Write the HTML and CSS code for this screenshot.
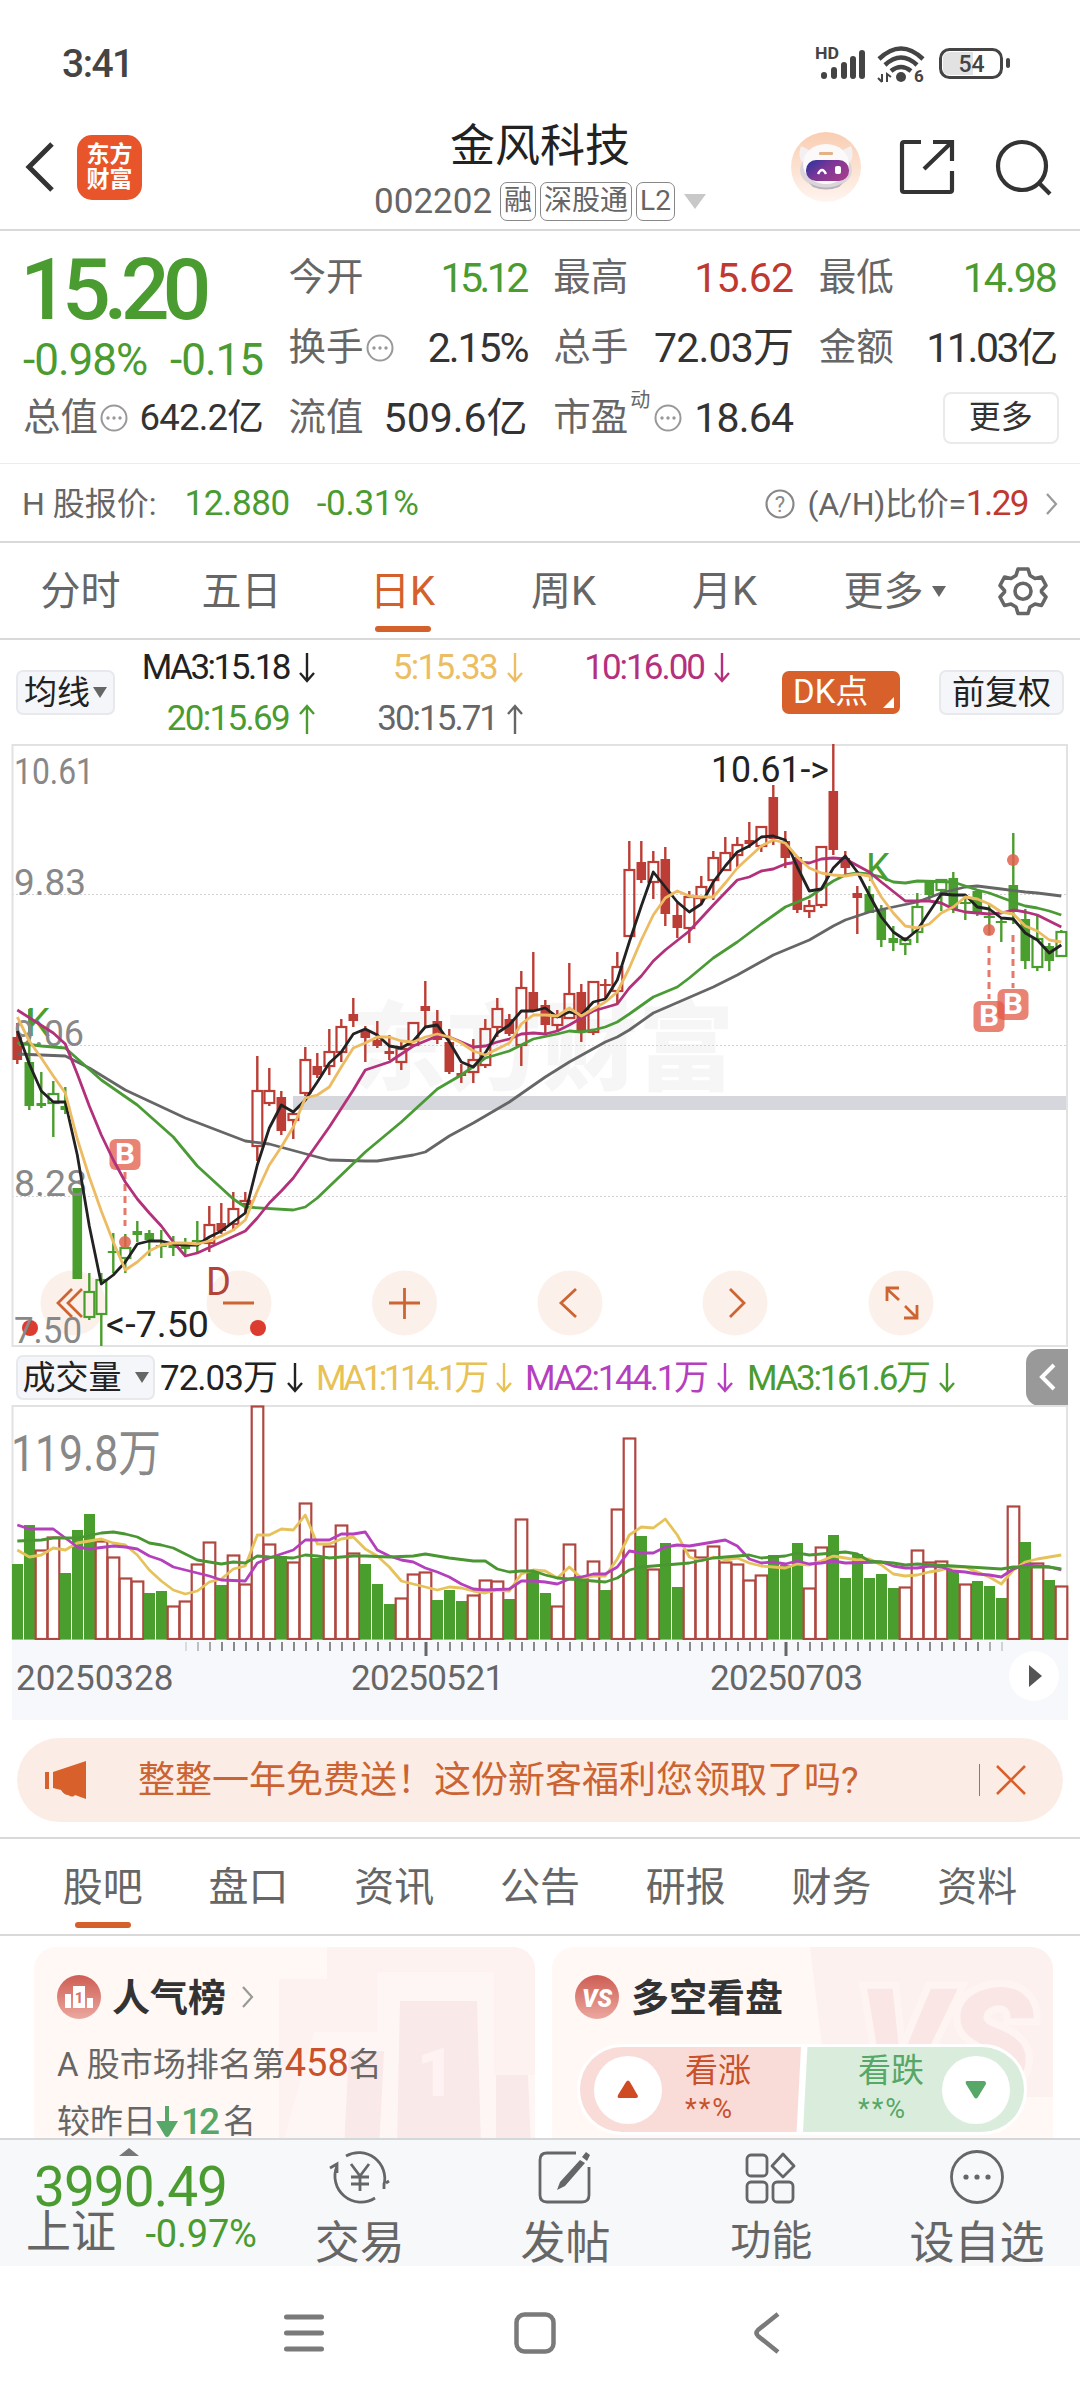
FILE: index.html
```html
<!DOCTYPE html>
<html lang="zh-CN">
<head>
<meta charset="UTF-8">
<meta name="viewport" content="width=device-width, initial-scale=1.0">
<title>金风科技 002202</title>
<link rel="stylesheet" href="styles.css">
</head>
<body>
<svg width="0" height="0" class="defs">
    <symbol id="down" viewBox="0 0 16 30"><path d="M8 0V28M1 20L8 28L15 20" fill="none" stroke="currentColor" stroke-width="2.4"/></symbol>
    <symbol id="up" viewBox="0 0 16 30"><path d="M8 30V2M1 10L8 2L15 10" fill="none" stroke="currentColor" stroke-width="2.4"/></symbol>
    <symbol id="dots" viewBox="0 0 28 28"><circle cx="14" cy="14" r="12.5" fill="none" stroke="#999" stroke-width="2"/><circle cx="8" cy="14" r="1.7" fill="#999"/><circle cx="14" cy="14" r="1.7" fill="#999"/><circle cx="20" cy="14" r="1.7" fill="#999"/></symbol>
</svg>
<div class="phone">
    <div class="status">
        <span class="time">3:41</span>
        <svg class="status-icons" width="200" height="40" viewBox="0 0 200 40">
            <g fill="#444">
                <text x="0" y="14" font-size="17" font-weight="700" textLength="24" lengthAdjust="spacingAndGlyphs">HD</text>
                <rect x="6" y="27" width="6" height="7" rx="3"/>
                <rect x="16" y="22" width="6" height="12" rx="3"/>
                <rect x="26" y="17" width="6" height="17" rx="3"/>
                <rect x="35" y="11" width="6" height="23" rx="3"/>
                <rect x="44" y="5" width="6" height="29" rx="3"/>
                <circle cx="86" cy="32" r="5"/>
                <text x="99" y="37" font-size="17" font-weight="700">6</text>
                <path d="M67 29V37M63 33L67 37M72 37V29L76 32" stroke="#444" stroke-width="2" fill="none"/>
            </g>
            <g fill="none" stroke="#444" stroke-width="4.5">
                <path d="M64 14Q86 -7 108 14"/>
                <path d="M70 20Q86 5 102 20"/>
                <path d="M76 26Q86 18 96 26"/>
            </g>
            <rect x="125.500" y="4.500" width="61" height="28" rx="9" fill="#fff" stroke="#444" stroke-width="3"/>
            <path d="M136 7H158V30H136Q128 30 128 24V13Q128 7 136 7Z" fill="#e2e2e2"/>
            <text x="156.500" y="27" font-size="23" font-weight="500" fill="#444" text-anchor="middle">54</text>
            <rect x="191" y="13" width="4" height="10" rx="2" fill="#444"/>
        </svg>
    </div>

    <div class="header">
        <div class="header-left">
            <svg width="36" height="56" viewBox="0 0 36 56"><path d="M29 5L6 28L29 51" fill="none" stroke="#333" stroke-width="5"/></svg>
            <div class="logo">东方<br>财富</div>
        </div>
        <div class="title">
            <h1>金风科技</h1>
            <div class="code">
                <span class="code-num">002202</span>
                <span class="tag">融</span>
                <span class="tag">深股通</span>
                <span class="tag">L2</span>
                <i class="tri tri-code"></i>
            </div>
        </div>
        <div class="header-right">
            <svg width="70" height="70" viewBox="0 0 70 70">
                <defs>
                    <linearGradient id="halo" x1="0" y1="0" x2="0" y2="1"><stop offset="0" stop-color="#f9cdb2"/><stop offset="1" stop-color="#fff5ef"/></linearGradient>
                    <linearGradient id="visor" x1="0" y1="0" x2="1" y2="0.600"><stop offset="0" stop-color="#26349e"/><stop offset="0.500" stop-color="#7a3697"/><stop offset="1" stop-color="#a03c8c"/></linearGradient>
                </defs>
                <circle cx="35" cy="35" r="35" fill="url(#halo)"/>
                <path d="M10 14Q6 24 12 32L22 20ZM60 14Q64 24 58 32L48 20Z" fill="#f4f0f1"/>
                <ellipse cx="35" cy="38" rx="26" ry="18" fill="#d9d5da"/>
                <ellipse cx="35" cy="32" rx="23" ry="20" fill="#fbf9fa"/>
                <rect x="28" y="20" width="14" height="3" rx="1" fill="#e3b285"/>
                <rect x="15" y="28" width="43" height="21" rx="10" fill="url(#visor)"/>
                <path d="M27 42Q31 34 35 42" fill="none" stroke="#fff" stroke-width="2.500"/>
                <rect x="44" y="34" width="6" height="8" rx="2" fill="#fff"/>
                <path d="M18 51Q35 60 52 51L48 55Q35 60 22 55Z" fill="#b9b1ba"/>
            </svg>
            <svg width="56" height="56" viewBox="0 0 56 56"><path d="M22 3H5Q3 3 3 5V51Q3 53 5 53H51Q53 53 53 51V32M34 3H53V22M53 3L25 30" fill="none" stroke="#333" stroke-width="4.200"/></svg>
            <svg width="58" height="58" viewBox="0 0 58 58"><circle cx="27" cy="28" r="24" fill="none" stroke="#333" stroke-width="4.200"/><path d="M44 45L55 56" stroke="#333" stroke-width="4.200"/></svg>
        </div>
    </div>

    <div class="quote">
        <div class="price">
            <div class="price-big">15.20</div>
            <div class="price-diff"><span>-0.98%</span><span>-0.15</span></div>
        </div>
        <div class="item"><label>今开</label><b class="green tight">15.12</b></div>
        <div class="item"><label>最高</label><b class="red">15.62</b></div>
        <div class="item"><label>最低</label><b class="green semi">14.98</b></div>
        <div class="item"><label>换手</label><svg class="info"><use href="#dots"/></svg><b class="semi">2.15%</b></div>
        <div class="item"><label>总手</label><b>72.03万</b></div>
        <div class="item"><label>金额</label><b class="tight2">11.03亿</b></div>
        <div class="item"><label>总值</label><svg class="info"><use href="#dots"/></svg><b class="small">642.2亿</b></div>
        <div class="item"><label>流值</label><b class="wide">509.6亿</b></div>
        <div class="item"><label>市盈</label><sup>动</sup><svg class="info"><use href="#dots"/></svg><b>18.64</b></div>
        <div class="item item-more"><span class="more">更多</span></div>
    </div>

    <div class="hshare">
        <span>H 股报价:</span>
        <span class="green hs-price">12.880</span>
        <span class="green hs-rate">-0.31%</span>
        <span class="hs-right">
            <svg width="30" height="30" viewBox="0 0 30 30"><circle cx="15" cy="15" r="13.500" fill="none" stroke="#888" stroke-width="2.200"/><text x="15" y="22.500" font-size="22" fill="#888" text-anchor="middle">?</text></svg>
            <span class="hs-ratio">(A/H)比价=<em>1.29</em></span>
            <svg width="14" height="24" viewBox="0 0 14 24"><path d="M2 2L11 12L2 22" fill="none" stroke="#999" stroke-width="2.200"/></svg>
        </span>
    </div>

    <div class="ktabs">
        <div class="ktab">分时</div>
        <div class="ktab">五日</div>
        <div class="ktab active">日K</div>
        <div class="ktab">周K</div>
        <div class="ktab">月K</div>
        <div class="ktab ktab-more">更多<i class="tri tri-tab"></i></div>
        <svg class="gear" width="50" height="50" viewBox="0 0 50 50"><path d="M20 3H30L32 9.500L37 12.500L43.500 11L48 19.500L43.500 24.500V26L48 31L43.500 39.500L37 38L32 41L30 47.500H20L18 41L13 38L6.500 39.500L2 31L6.500 26V24.500L2 19.500L6.500 11L13 12.500L18 9.500Z" fill="none" stroke="#666" stroke-width="3.600" stroke-linejoin="round"/><circle cx="25" cy="25.200" r="8" fill="none" stroke="#666" stroke-width="3.600"/></svg>
    </div>

    <div class="mabar">
        <div class="btn btn-ma">均线<i class="tri tri-ma"></i></div>
        <div class="malist">
            <span class="c-black">MA3:15.18<svg class="arr"><use href="#down"/></svg></span>
            <span class="c-yellow">5:15.33<svg class="arr"><use href="#down"/></svg></span>
            <span class="c-pink">10:16.00<svg class="arr"><use href="#down"/></svg></span>
            <span class="c-green">20:15.69<svg class="arr"><use href="#up"/></svg></span>
            <span class="c-gray">30:15.71<svg class="arr"><use href="#up"/></svg></span>
        </div>
        <div class="btn btn-dk">DK点</div>
        <div class="btn btn-fq">前复权</div>
    </div>

    <svg id="kline" class="kline" width="1080" height="606" viewBox="0 4 1080 606"></svg>

    <div class="volbar">
        <div class="btn btn-vol">成交量<i class="tri tri-vol"></i></div>
        <span class="v0 c-black">72.03万<svg class="arr"><use href="#down"/></svg></span>
        <span class="v1 c-gold">MA1:114.1万<svg class="arr"><use href="#down"/></svg></span>
        <span class="v2 c-purple">MA2:144.1万<svg class="arr"><use href="#down"/></svg></span>
        <span class="v3 c-green">MA3:161.6万<svg class="arr"><use href="#down"/></svg></span>
        <div class="fold"><svg width="20" height="28" viewBox="0 0 20 28"><path d="M16 2L4 14L16 26" fill="none" stroke="#fff" stroke-width="4"/></svg></div>
    </div>

    <svg id="volume" class="volume" width="1080" height="235" viewBox="0 5 1080 235"></svg>

    <div class="axis">
        <svg id="ticks" width="1055" height="20" viewBox="12 0 1055 20"></svg>
        <div class="dates">
            <span class="d1">20250328</span>
            <span class="d2">20250521</span>
            <span class="d3">20250703</span>
            <span class="play"><svg width="14" height="22" viewBox="0 0 14 22"><path d="M0 0L13 11L0 22Z" fill="#555"/></svg></span>
        </div>
    </div>

    <div class="notice">
        <svg class="horn" width="44" height="38" viewBox="0 0 44 38"><path d="M1 11H5V28H1ZM9 11L42 0V38L31 34Q29 37 24 34Q20 34 17 29L9 27Z" fill="#d8602b"/></svg>
        <span class="notice-text">整整一年免费送！这份新客福利您领取了吗?</span>
        <span class="notice-close"><svg width="32" height="32" viewBox="0 0 32 32"><path d="M2 2L30 30M30 2L2 30" stroke="#d8602b" stroke-width="2.600"/></svg></span>
    </div>

    <div class="ntabs">
        <div class="ntab active">股吧</div>
        <div class="ntab">盘口</div>
        <div class="ntab">资讯</div>
        <div class="ntab">公告</div>
        <div class="ntab">研报</div>
        <div class="ntab">财务</div>
        <div class="ntab">资料</div>
    </div>

    <div class="cards">
        <div class="card">
            <svg class="card-bg" width="501" height="210" viewBox="0 0 501 210">
                <path d="M293 0H480Q501 0 501 22V210H245V32H293Z" fill="#fdf2f0"/>
                <path d="M280 85H343V25H460V128H501V210H245Z" fill="#fef6f4"/>
                <path d="M366 54H443L447 202H363ZM315 104H350L345 202H310ZM462 128H494L497 202H462Z" fill="#f9e9e8"/>
                <text x="402" y="149" font-size="66" font-weight="900" fill="#fef3f2" text-anchor="middle">1</text>
            </svg>
            <div class="card-head">
                <svg width="44" height="44" viewBox="0 0 44 44"><defs><linearGradient id="badge" x1="0" y1="0" x2="0" y2="1"><stop offset="0" stop-color="#ce5d54"/><stop offset="1" stop-color="#eba89f"/></linearGradient></defs><circle cx="22" cy="22" r="22" fill="url(#badge)"/><path d="M8 19H14V33H8ZM16 11H28V33H16ZM30 23H36V33H30Z" fill="#fff"/><text x="22" y="28" font-size="15" font-weight="700" fill="#d87068" text-anchor="middle">1</text></svg>
                <h2>人气榜</h2>
                <svg class="card-more" width="14" height="24" viewBox="0 0 14 24"><path d="M2 2L11 12L2 22" fill="none" stroke="#999" stroke-width="2.200"/></svg>
            </div>
            <p class="rank">A 股市场排名第<em>458</em>名</p>
            <p class="rank rank2">较昨日<svg width="22" height="31" viewBox="0 0 22 31"><path d="M9 0H13V15H22L13 30Q11 32 9 30L0 15H9Z" fill="#56a768"/></svg><b>12</b> 名</p>
        </div>
        <div class="card">
            <svg class="card-bg" width="502" height="210" viewBox="0 0 502 210">
                <path d="M258 0H480Q502 0 502 22V150H276Z" fill="#fdf1ef"/>
                <text x="306" y="142" font-size="140" font-weight="900" font-style="italic" fill="#fae7e5" stroke="#fef5f3" stroke-width="14" paint-order="stroke">VS</text>
            </svg>
            <div class="card-head">
                <svg width="45" height="44" viewBox="0 0 45 44"><circle cx="22" cy="22" r="22" fill="url(#badge)"/><text x="22" y="32" font-size="26" font-weight="900" font-style="italic" fill="#fff" text-anchor="middle" textLength="30" lengthAdjust="spacingAndGlyphs">VS</text></svg>
                <h2>多空看盘</h2>
            </div>
            <div class="vote">
                <div class="vote-up">
                    <span class="ball"><svg width="24" height="20" viewBox="0 0 24 20"><path d="M10 2Q12 -1 14 2L22 16Q22 18 20 18H3Q1 18 2 15Z" fill="#cf4b24"/></svg></span>
                    <span class="vote-text">看涨<small>**%</small></span>
                </div>
                <div class="vote-down">
                    <span class="vote-text">看跌<small>**%</small></span>
                    <span class="ball"><svg width="24" height="20" viewBox="0 0 24 20"><path d="M10 17Q12 20 14 17L22 4Q22 1 20 1H3Q1 1 2 4Z" fill="#56a768"/></svg></span>
                </div>
            </div>
        </div>
    </div>

    <div class="toolbar">
        <div class="index">
            <i class="tri tri-up"></i>
            <div class="index-num">3990.49</div>
            <div class="index-row"><span>上证</span><em>-0.97%</em></div>
        </div>
        <div class="tool">
            <svg width="62" height="60" viewBox="0 0 62 60"><g fill="none" stroke="#666" stroke-width="2.800"><path d="M17 9A26 26 0 0 1 55 38M57 36L60 34M55 42V36M46 51A26 26 0 0 1 8 19M1 21L8 17V26"/><path d="M22 17L31 29L40 17M31 29V44M22 30H40M22 37H40"/></g></svg>
            <span>交易</span>
        </div>
        <div class="tool">
            <svg width="62" height="60" viewBox="0 0 62 60"><path d="M42 6H13Q6 6 6 13V48Q6 55 13 55H48Q55 55 55 48V20" fill="none" stroke="#666" stroke-width="2.800"/><path d="M46 13L51 16L31 39L23 43L26 35ZM48 10L52 5L56 8L53 14Z" fill="#666"/></svg>
            <span>发帖</span>
        </div>
        <div class="tool tool-s">
            <svg width="62" height="60" viewBox="0 0 62 60"><g fill="none" stroke="#666" stroke-width="2.800"><rect x="7" y="8" width="20" height="21" rx="4"/><rect x="7" y="35" width="20" height="20" rx="4"/><rect x="33" y="35" width="20" height="20" rx="4"/><path d="M43 7L54 19L43 30L32 19Z" stroke-linejoin="round"/></g></svg>
            <span>功能</span>
        </div>
        <div class="tool">
            <svg width="62" height="60" viewBox="0 0 62 60"><circle cx="31" cy="30" r="25.500" fill="none" stroke="#666" stroke-width="2.800"/><circle cx="20" cy="30" r="2.600" fill="#666"/><circle cx="31" cy="30" r="2.600" fill="#666"/><circle cx="42" cy="30" r="2.600" fill="#666"/></svg>
            <span>设自选</span>
        </div>
    </div>

    <div class="nav">
        <svg width="40" height="42" viewBox="0 0 40 42"><path d="M2.500 5H37.500M2.500 21H37.500M2.500 37H37.500" stroke="#7a7a7a" stroke-width="5" stroke-linecap="round"/></svg>
        <svg width="42" height="42" viewBox="0 0 42 42"><rect x="2.500" y="2.500" width="37" height="37" rx="8" fill="none" stroke="#7a7a7a" stroke-width="4.500"/></svg>
        <svg width="28" height="42" viewBox="0 0 28 42"><path d="M25 2L5 18Q2 21 5 24L25 40" fill="none" stroke="#7a7a7a" stroke-width="4.500"/></svg>
    </div>
</div>
<script src="script.js"></script>
</body>
</html>
```

FILE: styles.css
```css
* {
    box-sizing: border-box;
}
body {
    margin: 0;
    background: #fff;
    font-family: Roboto, "Noto Sans CJK SC", sans-serif;
    color: #333;
}
h1, h2, p {
    margin: 0;
    font-weight: 400;
}
em, i {
    font-style: normal;
}
svg {
    display: block;
    flex: none;
}
.defs {
    position: absolute;
}
.phone {
    width: 1080px;
    height: 2400px;
    overflow: hidden;
    line-height: 1;
    white-space: nowrap;
}
.green, .c-green { color: #4a9b30; }
.red { color: #c0392f; }
.c-black { color: #222; }
.c-yellow { color: #ecbd63; }
.c-gold { color: #e8c255; }
.c-pink { color: #b5307c; }
.c-purple { color: #b53fc0; }
.c-gray { color: #666; }

.tri {
    display: inline-block;
    width: 0;
    height: 0;
    border-left: 7px solid transparent;
    border-right: 7px solid transparent;
    border-top: 11px solid #666;
}

/* status bar */
.status {
    height: 100px;
    padding: 45px 69px 0 62px;
    display: flex;
    justify-content: space-between;
}
.time {
    font-size: 39px;
    font-weight: 500;
    color: #444;
    letter-spacing: -1.5px;
}
.status-icons {
    width: 200px;
    margin-right: -4px;
}

/* header */
.header {
    height: 131px;
    border-bottom: 2px solid #d9d9d9;
    display: flex;
    justify-content: space-between;
}
.header-left {
    width: 290px;
    padding: 35px 0 0 23px;
    display: flex;
}
.header-left svg {
    margin-top: 4px;
}
.logo {
    width: 65px;
    height: 65px;
    margin-left: 18px;
    padding-top: 7px;
    border-radius: 15px;
    background: #e8552b;
    color: #fff;
    font-size: 23px;
    font-weight: 700;
    line-height: 25px;
    text-align: center;
}
.title {
    padding-top: 24px;
    text-align: center;
}
.title h1 {
    font-size: 45px;
    color: #222;
}
.code {
    margin-top: 13px;
    display: flex;
    align-items: center;
    color: #666;
}
.code-num {
    font-size: 35px;
    margin-right: 8px;
}
.tag {
    height: 39px;
    margin-right: 4px;
    padding: 0 3px;
    border: 1.5px solid #888;
    border-radius: 7px;
    font-size: 28px;
    line-height: 36px;
}
.tri-code {
    border-width: 15px 11px 0;
    border-top-color: #c8c8c8;
    margin-left: 5px;
}
.header-right {
    width: 290px;
    padding: 32px 27px 0 0;
    display: flex;
    justify-content: flex-end;
}
.header-right svg:nth-child(2) {
    margin: 7px 0 0 38px;
}
.header-right svg:nth-child(3) {
    margin: 6px 0 0 40px;
}

/* quote panel */
.quote {
    height: 233px;
    padding: 12px 24px 0 23px;
    border-bottom: 1px solid #ececec;
    display: grid;
    grid-template-columns: 240px 239px 240px 237px;
    grid-template-rows: 70px 70px 70px;
    column-gap: 25.600px;
}
.price {
    grid-row: 1 / 3;
    color: #4a9b30;
    padding-top: 4px;
}
.price-big {
    margin-left: -3px;
    font-size: 86px;
    font-weight: 500;
    letter-spacing: -7px;
}
.price-diff {
    margin-top: 5px;
    display: flex;
    justify-content: space-between;
    font-size: 44px;
    letter-spacing: -1px;
}
.item {
    display: flex;
    align-items: center;
}
.item label {
    font-size: 37.500px;
    color: #666;
}
.item b {
    margin-left: auto;
    font-size: 41px;
    font-weight: 400;
    letter-spacing: -0.8px;
}
.item b.tight {
    letter-spacing: -3.6px;
    padding-right: 2px;
}
.item b.tight2 {
    letter-spacing: -2.4px;
}
.item b.semi {
    letter-spacing: -2px;
}
.item b.wide {
    letter-spacing: 0;
}
.item b.small {
    font-size: 36.500px;
}
.item sup {
    align-self: flex-start;
    margin: 7px 2px 0;
    font-size: 20px;
    line-height: 20px;
    color: #666;
}
.info {
    width: 28px;
    height: 28px;
    margin-left: 2px;
}
.item-more {
    justify-content: flex-end;
}
.more {
    width: 116px;
    height: 52px;
    margin-right: -3px;
    border: 2px solid #e8eaec;
    border-radius: 8px;
    font-size: 32px;
    line-height: 47px;
    text-align: center;
}

/* H share row */
.hshare {
    height: 79px;
    padding: 2px 21px 0 22px;
    border-bottom: 2px solid #d9d9d9;
    display: flex;
    align-items: center;
    font-size: 32px;
    color: #666;
}
.hs-price {
    margin-left: 28px;
    font-size: 35px;
    letter-spacing: -0.4px;
}
.hs-rate {
    margin-left: 27px;
    font-size: 35px;
    letter-spacing: -0.3px;
}
.hs-right {
    margin-left: auto;
    display: flex;
    align-items: center;
}
.hs-ratio {
    margin: 0 17px 0 13px;
    letter-spacing: -0.300px;
}
.hs-ratio em {
    font-size: 35px;
    color: #c0392f;
    letter-spacing: -1.5px;
}

/* period tabs */
.ktabs {
    height: 97px;
    border-bottom: 2px solid #d9d9d9;
    display: flex;
    align-items: center;
}
.ktab {
    position: relative;
    width: 161px;
    height: 95px;
    font-size: 40px;
    line-height: 97px;
    text-align: center;
    color: #666;
}
.ktab-more {
    padding-left: 18px;
}
.tri-tab {
    margin: 0 0 8px 8px;
}
.active {
    color: #d4602b;
}
.active::after {
    content: "";
    position: absolute;
    left: 50%;
    bottom: 6px;
    width: 56px;
    height: 6px;
    margin-left: -28px;
    border-radius: 3px;
    background: #d4602b;
}
.gear {
    margin-left: 32px;
}

/* moving averages */
.mabar {
    height: 104px;
    padding: 0 16px;
    display: flex;
    align-items: center;
}
.btn {
    height: 45px;
    border: 2px solid #e7e9ec;
    border-radius: 7px;
    background: #f5f6f9;
    font-size: 33px;
    line-height: 41px;
    text-align: center;
    color: #222;
}
.btn-ma {
    width: 99px;
}
.tri-ma {
    margin: 0 0 6px 3px;
}
.malist {
    margin-left: 29px;
    padding-top: 2px;
    display: grid;
    grid-template-columns: 171px 208px 207px;
    grid-template-rows: 51px 51px;
}
.malist span {
    display: flex;
    align-items: center;
    justify-content: flex-end;
    font-size: 35px;
    letter-spacing: -2px;
}
.malist .c-black {
    letter-spacing: -2.5px;
}
.malist .c-yellow, .malist .c-green {
    letter-spacing: -1.700px;
}
.arr {
    width: 16px;
    height: 30px;
    margin-left: 10px;
}
.btn-dk {
    position: relative;
    width: 118px;
    height: 43px;
    margin-left: 52px;
    padding-left: 11px;
    border: 0;
    background: #d8602b;
    color: #fff;
    text-align: left;
}
.btn-dk::after {
    content: "";
    position: absolute;
    right: 6px;
    bottom: 6px;
    border-left: 11px solid transparent;
    border-bottom: 11px solid #fff;
}
.btn-fq {
    width: 125px;
    margin-left: auto;
}

/* volume header */
.volbar {
    height: 55px;
    padding-left: 16px;
    display: flex;
    align-items: center;
    font-size: 35px;
}
.volbar span {
    display: flex;
    align-items: center;
    padding-top: 1px;
}
.volbar .arr {
    margin-left: 10px;
}
.btn-vol {
    width: 139px;
}
.tri-vol {
    margin: 0 0 6px 13px;
}
.v0 {
    width: 156px;
    margin-left: 5px;
    letter-spacing: -1px;
}
.v1 {
    width: 209px;
    letter-spacing: -3.500px;
}
.v2, .v3 {
    width: 222px;
    letter-spacing: -2.300px;
}
.fold {
    width: 42px;
    height: 57px;
    margin: -1px 12px 0 auto;
    padding: 14px 0 0 12px;
    border-radius: 14px 0 0 14px;
    background: #999;
}

/* date axis */
.axis {
    height: 80px;
    margin: 0 12px;
    width: 1056px;
    background: #f7f8fb;
}
.dates {
    display: flex;
    align-items: center;
    margin-top: -9px;
    height: 50px;
    font-size: 35px;
    letter-spacing: -0.6px;
    color: #666;
}
.dates > span {
    padding-top: 5px;
}
.d1 { width: 335px; padding-left: 4px; letter-spacing: 0; }
.d2 { width: 362px; padding-left: 4px; }
.d3 { padding-left: 1px; }
.dates .play {
    width: 50px;
    height: 50px;
    margin: 0 9px 0 auto;
    padding: 14px 0 0 20px;
    border-radius: 50%;
    background: #fff;
}

/* notice */
.notice {
    height: 84px;
    margin: 18px 17px 15px;
    padding: 0 36px 0 27px;
    border-radius: 42px;
    background: #fbede5;
    display: flex;
    align-items: center;
    color: #cb6332;
}
.notice-text {
    margin-left: 50px;
    padding-top: 1px;
    font-size: 37px;
}
.notice-close {
    margin-left: auto;
    padding-left: 15px;
    border-left: 1.5px solid #cb6332;
}

/* news tabs */
.ntabs {
    height: 99px;
    padding: 0 30px 0 30px;
    border-top: 2px solid #d9d9d9;
    border-bottom: 2px solid #d9d9d9;
    display: flex;
}
.ntab {
    position: relative;
    flex: 1;
    font-size: 40px;
    line-height: 98px;
    text-align: center;
    color: #666;
}

/* cards */
.cards {
    height: 202px;
    padding: 11px 26px 0 34px;
    display: flex;
    gap: 17px;
    overflow: hidden;
}
.card {
    position: relative;
    width: 501px;
    height: 240px;
    padding: 27px 23px;
    border-radius: 22px;
    background: #fff8f5;
    overflow: hidden;
}
.card > * {
    position: relative;
}
.card .card-bg {
    position: absolute;
    left: 0;
    top: 0;
}
.card-head {
    display: flex;
    align-items: center;
    height: 45px;
}
.card-head h2 {
    margin-left: 11px;
    padding-top: 2px;
    font-size: 38px;
    font-weight: 700;
}
.card-more {
    margin-left: 15px;
}
.rank {
    margin-top: 25px;
    font-size: 33px;
    color: #666;
}
.rank em {
    font-size: 38px;
    color: #c9512b;
}
.rank2 {
    display: flex;
    align-items: center;
    margin-top: 21px;
}
.rank2 b {
    margin: 0 6px 0 3px;
    font-size: 37px;
    font-weight: 500;
    letter-spacing: -3px;
    color: #56a768;
}
.vote {
    display: flex;
    gap: 6px;
    width: 450px;
    height: 91px;
    margin: 25px 0 0 2px;
    border: 3px solid #fff;
    border-radius: 45px;
    background: #fff;
    overflow: hidden;
}
.vote-up, .vote-down {
    flex: 1;
    display: flex;
    align-items: center;
    padding: 0 14px;
}
.vote-up {
    background: #f9dcd8;
    color: #c9512b;
    clip-path: polygon(0 0, 100% 0, 98% 100%, 0 100%);
}
.vote-down {
    margin-left: -4px;
    background: #daeddc;
    color: #56a768;
    justify-content: flex-end;
    clip-path: polygon(2% 0, 100% 0, 100% 100%, 0 100%);
}
.ball {
    width: 68px;
    height: 68px;
    border-radius: 50%;
    background: #fff;
    display: flex;
    align-items: center;
    justify-content: center;
}
.vote-text {
    margin: -3px 0 0 23px;
    font-size: 33px;
}
.vote-text small {
    display: block;
    margin-top: 9px;
    font-size: 27px;
    letter-spacing: 2px;
}
.vote-down .vote-text {
    margin: -3px 18px 0 0;
}

/* toolbar */
.toolbar {
    height: 128px;
    border-top: 2px solid #d5d8db;
    background: #f6f8fa;
    display: flex;
}
.index {
    position: relative;
    width: 257px;
    color: #4a9b30;
}
.tri-up {
    position: absolute;
    left: 119px;
    top: 8px;
    border-width: 0 10px 8px;
    border-bottom: 8px solid #777;
}
.index-num {
    padding: 20px 0 0 34px;
    font-size: 55px;
    letter-spacing: -1px;
}
.index-row {
    display: flex;
    justify-content: space-between;
    align-items: center;
    margin-top: -5px;
    padding-left: 26px;
    font-size: 45px;
}
.index-row span {
    color: #666;
}
.index-row em {
    padding-top: 2px;
    font-size: 38px;
    letter-spacing: -0.200px;
}
.tool {
    width: 206px;
    padding-top: 7px;
    display: flex;
    flex-direction: column;
    align-items: center;
    font-size: 45px;
    color: #666;
}
.tool span {
    margin-top: 14px;
}
.tool-s span {
    font-size: 41px;
}

/* system nav */
.nav {
    height: 132px;
    padding: 46px 299px 0 284px;
    display: flex;
}
.nav svg:nth-child(2) {
    margin: 0 auto 0 190px;
}

/* charts */
.kline .label {
    font-size: 36px;
    fill: #888;
}
.kline .mark {
    font-size: 36px;
    fill: #222;
}
.kline .watermark {
    font-size: 96px;
    font-weight: 900;
    fill: #f6f6f6;
}
.kline .letter {
    font-size: 38px;
}
.volume .label {
    font-size: 50px;
    fill: #888;
}
```

FILE: script.js
```js
// day candles: [type, high, bodyTop, bodyBottom, low]
// r = red filled, R = red hollow, g = green filled, G = green hollow
const candles = [
    ['r',283,297,320,324],['g',269,322,366,370],['g',332,363,366,368],['G',341,354,363,397],
    ['g',347,366,370,374],['g',448,448,539,539],['G',533,552,577,580],['G',533,540,574,606],
    ['g',493,511,513,533],['G',494,508,518,533],['g',481,491,495,502],['g',490,493,500,516],
    ['g',490,505,507,518],['g',496,505,508,516],['g',498,506,509,514],['g',481,500,502,513],
    ['R',466,485,503,512],['r',463,483,491,494],['R',452,469,484,491],['R',452,461,464,474],
    ['R',316,351,406,421],['R',328,351,363,366],['r',351,357,391,395],['R',373,374,380,399],
    ['R',307,320,353,356],['r',313,326,335,338],['R',289,312,326,335],['R',279,287,312,322],
    ['r',258,274,281,287],['r',286,291,298,322],['r',281,300,306,308],['r',295,311,314,320],
    ['R',302,309,322,330],['R',283,283,305,305],['r',241,266,271,287],['r',270,281,300,304],
    ['r',289,302,332,334],['r',324,333,336,343],['R',299,320,332,343],['R',279,289,325,328],
    ['R',258,269,287,297],['r',274,279,294,296],['R',231,248,305,326],['r',212,252,271,271],
    ['r',260,265,285,293],['R',270,277,285,291],['R',223,254,278,278],['r',244,252,291,302],
    ['R',241,242,292,295],['r',239,244,246,258],['R',212,227,251,263],['R',101,130,196,196],
    ['r',101,122,140,143],['R',111,122,142,159],['r',107,119,174,186],['r',163,175,188,198],
    ['R',151,157,188,203],['R',136,147,158,163],['R',111,118,140,160],['R',97,113,130,130],
    ['R',97,105,115,127],['r',82,100,104,108],['R',86,87,106,112],['r',45,57,99,105],
    ['r',91,101,118,128],['r',116,117,170,173],['R',160,166,171,178],['R',107,107,165,168],
    ['r',4,51,110,115],['r',111,118,128,135],['r',146,153,158,194],['g',146,154,173,173],
    ['g',165,170,200,207],['g',186,198,203,211],['G',197,200,204,215],['G',153,167,192,203],
    ['g',141,141,155,162],['G',139,140,150,171],['g',132,138,170,173],['g',155,162,164,180],
    ['g',150,151,173,176],['g',165,176,178,195],['g',177,181,183,202],['g',93,145,172,184],
    ['g',169,179,221,229],['G',175,199,227,231],['g',203,206,221,231],['G',190,192,216,217]
];

// moving averages: index, y, index, y ...
const ma30 = [0,314,4,316,6,328,9,350,14,378,19,401,21,404,25,417,26,420,29,421,30,421,32,417,33,415,34,412,36,396,38,383,41,362,44,337,46,322,49,302,50,297,51,290,53,273,58,247,60,235,63,215,66,200,68,186,69,180,71,172,73,167,75,162,77,153,79,147,80,146,82,149,84,152,85,153,87,156];
const ma20 = [0,303,2,306,4,308,7,340,10,365,13,397,15,426,18,459,19,467,23,470,24,467,25,458,29,412,32,382,35,349,37,335,39,318,41,311,43,299,45,294,46,291,47,292,48,290,49,287,50,282,51,274,53,257,55,247,56,238,58,218,60,202,62,184,64,167,66,157,68,141,69,135,70,133,71,134,72,137,73,142,74,143,75,141,78,142,80,150,81,153,83,162,84,166,85,168,86,171,87,175];
const ma10 = [0,270,3,293,4,304,5,334,6,366,7,395,8,420,9,442,10,459,11,473,12,486,13,502,14,516,15,513,19,491,20,478,21,463,22,451,23,438,26,387,28,350,29,330,31,322,33,306,35,296,36,297,38,307,39,306,40,302,41,299,42,294,43,293,44,294,45,291,46,285,48,271,50,264,51,248,52,236,53,221,54,210,56,191,58,165,60,140,61,137,62,131,63,129,64,124,65,122,66,123,67,119,68,118,69,119,71,132,72,142,74,161,76,161,77,163,78,169,79,172,81,174,82,173,83,170,84,172,85,175,87,187];
const ma3 = [291,324,351,362,362,415,486,544,535,522,504,501,501,504,505,505,497,491,482,473,425,388,365,372,360,342,323,312,294,289,295,306,308,301,287,285,302,322,327,313,293,285,271,271,268,277,272,275,262,259,240,202,166,132,147,162,172,164,142,126,112,106,97,96,100,127,151,149,128,116,132,155,177,192,200,190,172,154,155,155,167,169,178,179,193,200,213,205];
const ma5 = [277,301,318,336,353,399,437,471,502,530,522,511,505,503,503,504,501,496,490,480,451,425,407,387,358,355,347,327,308,303,297,297,301,302,297,294,297,303,311,315,309,303,284,275,275,276,268,276,269,262,252,228,200,175,158,151,156,157,157,143,128,117,106,100,103,117,128,133,135,136,134,136,157,173,186,188,184,173,167,157,159,164,172,174,186,191,200,202];

const volumes = 'g164 g125 R150 R137 g173 g130 g114 R141 R157 R178 R181 g193 g191 R206 R201 R164 R142 g185 R155 R184 R6 R144 g156 R162 R103 g158 R146 R125 R153 g164 g184 g204 R198 R174 R172 g200 g190 g201 R195 R180 R181 g199 R119 g170 g193 R206 R144 g178 R161 g190 R109 R38 g136 R169 g143 g187 R150 R157 R146 R162 R164 R180 R175 g155 g165 g143 R188 R147 g135 g178 g154 g178 g174 g188 R187 R150 R162 R161 g170 R184 g181 g186 g198 R106 g142 R163 g180 R186'.split(' ');
const vma1 = [150,157,155,148,150,143,141,139,143,145,155,170,181,190,194,191,182,179,169,166,135,135,129,130,115,144,144,139,137,149,156,167,181,184,187,190,187,188,191,193,190,191,174,170,171,178,167,178,176,176,159,135,127,128,119,135,157,161,157,160,158,163,166,167,168,164,165,161,156,158,160,159,165,174,176,175,172,170,167,167,172,177,184,170,162,159,157,155];
const vma2 = [0,125,1,129,3,129,4,138,5,147,6,149,8,146,9,147,10,149,11,156,12,160,13,167,16,176,17,180,19,181,20,163,21,158,22,154,23,150,24,140,25,140,26,140,27,134,28,134,29,132,30,150,31,156,32,160,33,162,34,168,35,172,36,177,37,184,38,189,39,190,41,189,42,181,43,181,44,182,45,184,46,179,47,177,48,174,49,174,50,167,51,151,52,153,53,153,54,147,55,145,56,146,59,140,60,146,61,159,62,163,63,162,64,164,65,161,66,164,67,163,68,161,69,163,72,162,73,166,74,168,75,168,76,166,77,167,78,171,79,172,80,174,81,175,82,177,83,169,84,165,86,167,87,170];
const vma3 = [0,141,2,140,3,138,5,138,7,133,8,132,9,134,10,137,11,143,12,145,13,148,15,160,16,162,17,164,18,162,19,163,20,156,21,157,23,158,24,155,25,156,26,158,28,156,29,156,31,157,33,156,34,154,35,156,36,158,38,161,39,161,40,169,41,172,42,171,43,171,44,175,45,178,47,180,48,181,49,182,50,178,51,170,52,167,54,165,56,163,58,158,61,155,62,158,64,156,65,153,66,155,69,152,70,154,71,161,73,163,74,165,75,164,78,166,82,169,83,167,86,167,87,169];

const RED = '#bb3d35';
const GREEN = '#4a9e2d';
const x = i => 17.3 + 12 * i;

function line(points, color) {
    return `<polyline points="${points}" fill="none" stroke="${color}" stroke-width="2.8" stroke-linejoin="round"/>`;
}
function dense(ys, color) {
    return line(ys.map((y, i) => x(i) + ',' + y).join(' '), color);
}
function sparse(list, color) {
    let pts = '';
    for (let i = 0; i < list.length; i += 2) {
        pts += x(list[i]) + ',' + list[i + 1] + ' ';
    }
    return line(pts, color);
}

function drawCandle(c, i) {
    const [type, high, top, bottom, low] = c;
    const color = type.toLowerCase() === 'r' ? RED : GREEN;
    const cx = x(i);
    if (type === 'r' || type === 'g') {
        const h = Math.max(bottom - top, 2);
        const w = h < 3 ? 11 : 9.6;
        return `<path d="M${cx} ${high}V${low}" stroke="${color}" stroke-width="2.4"/>
            <rect x="${cx - w / 2}" y="${top}" width="${w}" height="${h}" fill="${color}"/>`;
    }
    return `<path d="M${cx} ${high}V${top}M${cx} ${bottom}V${low}" stroke="${color}" stroke-width="2.4"/>
        <rect x="${cx - 4.8}" y="${top}" width="9.8" height="${bottom - top}" fill="none" stroke="${color}" stroke-width="2.2"/>`;
}

function buyMark(cx, top, y1, y2, dotY) {
    return `<path d="M${cx} ${y1}V${y2}" stroke="#e57a6b" stroke-width="3" stroke-dasharray="7 5"/>
        <circle cx="${cx}" cy="${dotY}" r="6" fill="#e2604e" opacity="0.85"/>
        <rect x="${cx - 15.500}" y="${top}" width="31" height="31" rx="6" fill="#e25a45" opacity="0.75"/>
        <text x="${cx}" y="${top + 25}" font-size="29" font-weight="700" fill="#fff" text-anchor="middle" textLength="20" lengthAdjust="spacingAndGlyphs">B</text>`;
}

function drawKline() {
    let s = '<text class="watermark" x="350" y="342" textLength="384">东方财富</text>';
    s += '<rect x="293" y="356" width="774" height="14" fill="#d5d7dc"/>';
    [154.5, 305.5, 456.5].forEach(y => {
        s += `<path d="M12 ${y}H1067" stroke="#d2d2d2" stroke-width="1" stroke-dasharray="2 2"/>`;
    });
    s += '<rect x="12.500" y="5" width="1054.500" height="601" fill="none" stroke="#e2e2e2" stroke-width="2"/>';

    // round control buttons
    [73, 239, 404.5, 570, 735, 901].forEach(cx => {
        s += `<circle cx="${cx}" cy="563" r="32.500" fill="#fbf1ea"/>`;
    });
    s += `<g fill="none" stroke="#cd6533" stroke-width="2.8">
        <path d="M72 549L58 563L72 577M82 549L68 563L82 577"/>
        <path d="M223 563H254M389 563H420M404.500 548V579"/>
        <path d="M576 549L561 563L576 577M730 549L744 563L730 577"/>
        <path d="M899 548H887V561M887 549L899 560M905 566L916 577M917 565V578H904"/>
    </g>`;

    s += `<g fill="${GREEN}" class="letter"><text x="26" y="296">K</text></g>`;
    s += '<circle cx="30" cy="588" r="8" fill="#dc3c30"/><circle cx="258" cy="588" r="8" fill="#dc3c30"/>';
    s += candles.map(drawCandle).join('');
    s += `<g fill="${GREEN}" class="letter"><text x="866" y="141">K</text></g>`;
    s += `<text class="letter" x="206" y="555" fill="#b34239">D</text>`;

    s += buyMark(125, 399, 432, 486, 502);
    s += buyMark(989, 261, 206, 259, 190);
    s += buyMark(1013, 249, 195, 248, 120);

    [['10.61', 43, 80], ['9.83', 154, 72], ['9.06', 305, 70], ['8.28', 455, 73], ['7.50', 602, 68]].forEach(l => {
        s += `<text class="label" x="14" y="${l[1] + 0.5}" textLength="${l[2]}" lengthAdjust="spacingAndGlyphs">${l[0]}</text>`;
    });

    s += sparse(ma30, '#666') + sparse(ma20, '#4a9b35') + sparse(ma10, '#b3307a');
    s += dense(ma3, '#222') + dense(ma5, '#edbb62');

    s += '<text class="mark" x="106" y="597" textLength="103" lengthAdjust="spacingAndGlyphs">&lt;-7.50</text>';
    s += '<text class="mark" x="711" y="42" textLength="118" lengthAdjust="spacingAndGlyphs">10.61-&gt;</text>';
    document.getElementById('kline').innerHTML = s;
}

function drawVolume() {
    let s = '<rect x="12.500" y="6" width="1054.500" height="234" fill="none" stroke="#e2e2e2" stroke-width="2"/>';
    s += '<text class="label" x="11" y="71" textLength="150" lengthAdjust="spacingAndGlyphs">119.8万</text>';
    volumes.forEach((v, i) => {
        const top = Number(v.slice(1));
        if (v[0] === 'g') {
            s += `<rect x="${x(i) - 5.3}" y="${top}" width="11" height="${239.5 - top}" fill="${GREEN}"/>`;
        } else {
            s += `<rect x="${x(i) - 5.6}" y="${top + 0.5}" width="11.600" height="${238.5 - top}" fill="#fff" stroke="#b04740" stroke-width="2.2"/>`;
        }
    });
    s += dense(vma1, '#e6c35a') + sparse(vma2, '#b440bd') + sparse(vma3, '#4a9632');
    document.getElementById('volume').innerHTML = s;
}

function drawTicks() {
    let s = '';
    for (let i = 14; i <= 82; i++) {
        const major = i === 34 || i === 64;
        const fade = Math.min(1, (i - 13) / 4, (83 - i) / 3);
        s += `<path d="M${x(i) + 0.7} 2V${major ? 16 : 11}" stroke="${major ? '#666' : '#888'}" stroke-width="${major ? 3 : 2}" opacity="${fade}"/>`;
    }
    document.getElementById('ticks').innerHTML = s;
}

drawKline();
drawVolume();
drawTicks();
```
